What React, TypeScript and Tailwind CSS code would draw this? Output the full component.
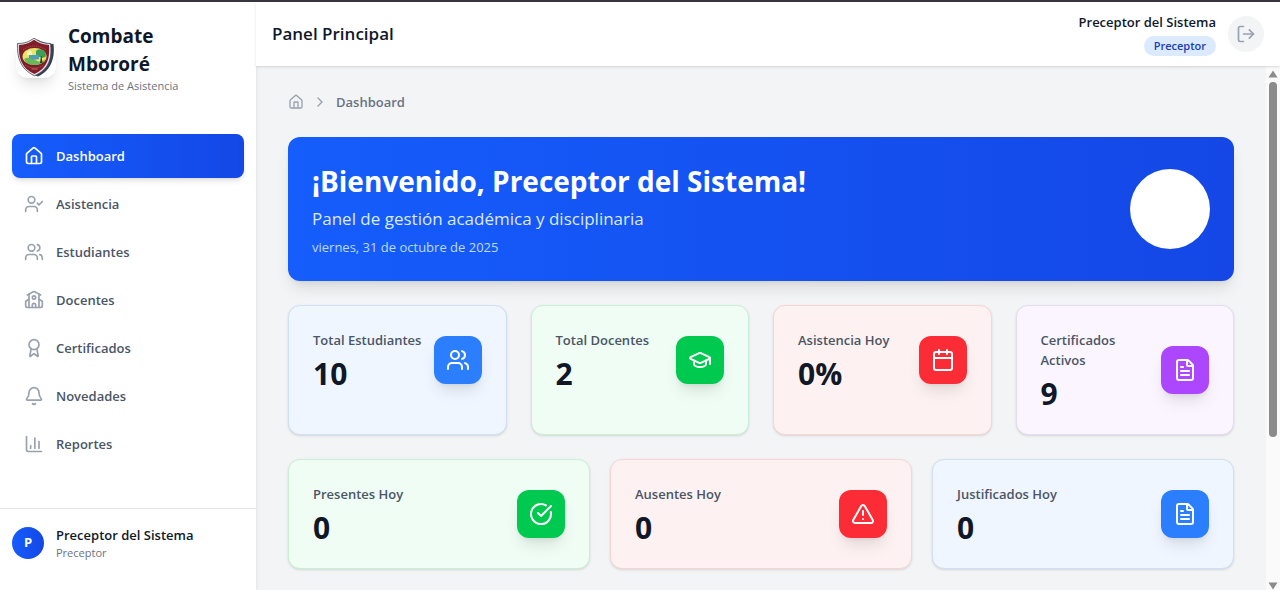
import {
  Award, Bell, Calendar, ChartColumn, ChevronRight, CircleCheckBig, FileText, GraduationCap,
  House, LogOut, School, TriangleAlert, UserCheck, Users, type LucideIcon,
} from "lucide-react";

const navItems: { label: string; icon: LucideIcon }[] = [
  { label: "Dashboard", icon: House },
  { label: "Asistencia", icon: UserCheck },
  { label: "Estudiantes", icon: Users },
  { label: "Docentes", icon: School },
  { label: "Certificados", icon: Award },
  { label: "Novedades", icon: Bell },
  { label: "Reportes", icon: ChartColumn },
];

type Tone = "blue" | "green" | "red" | "purple";

const cardTone: Record<Tone, string> = {
  blue: "bg-blue-50 border-[#cfdff5]",
  green: "bg-[#effdf5] border-[#c9efd6]",
  red: "bg-[#fef1f1] border-[#f8d5d5]",
  purple: "bg-purple-50 border-[#e4dbf5]",
};

const iconTone: Record<Tone, string> = {
  blue: "bg-[#2b7fff]",
  green: "bg-[#00c950]",
  red: "bg-[#fb2c36]",
  purple: "bg-[#ad46ff]",
};

type Stat = { label: string; value: string; icon: LucideIcon; tone: Tone };

const totals: Stat[] = [
  { label: "Total Estudiantes", value: "10", icon: Users, tone: "blue" },
  { label: "Total Docentes", value: "2", icon: GraduationCap, tone: "green" },
  { label: "Asistencia Hoy", value: "0%", icon: Calendar, tone: "red" },
  { label: "Certificados Activos", value: "9", icon: FileText, tone: "purple" },
];

const today: Stat[] = [
  { label: "Presentes Hoy", value: "0", icon: CircleCheckBig, tone: "green" },
  { label: "Ausentes Hoy", value: "0", icon: TriangleAlert, tone: "red" },
  { label: "Justificados Hoy", value: "0", icon: FileText, tone: "blue" },
];

function StatCard({ label, value, icon: Icon, tone }: Stat) {
  return (
    <article className={`rounded-xl border p-6 shadow-sm ${cardTone[tone]}`}>
      <div className="flex items-center justify-between gap-3">
        <div className="min-w-0 flex-1">
          <p className="text-[13px] leading-5 font-semibold text-gray-600">{label}</p>
          <p className="mt-2 text-3xl leading-8 font-bold text-gray-900">{value}</p>
        </div>
        <div className={`flex size-12 shrink-0 items-center justify-center rounded-xl text-white shadow-lg ${iconTone[tone]}`}>
          <Icon size={24} />
        </div>
      </div>
    </article>
  );
}

function Crest() {
  return (
    <div className="size-10 shrink-0 rounded-xl bg-white shadow-lg">
      <svg viewBox="0 0 40 40" className="size-10" role="img" aria-label="Escudo">
        <path d="M21 1.500C26 4 31 5.500 37.500 6C39 19 36 32 22 38.500C17 37 10 31 8 25Z" fill="#35414f" />
        <path d="M18 0C22.500 3.500 27.500 5.500 34.500 5.500C36 19 34 31 18.500 37.800C4 31 1 19 1.500 5.500C9 5.500 13.500 3.500 18 0Z" fill="#e9dfe2" stroke="#3b4f66" strokeWidth="0.8" />
        <path d="M18 1.800C22.500 5 27.500 7 33 7C34 19 32 30 18.500 36C5 30 2.500 19 3 7C9 7 13.500 5 18 1.800Z" fill="#801d29" />
        <path d="M7 12Q18.500 4 30 12M9 27Q18.500 33 28 27" fill="none" stroke="#b4646c" strokeWidth="0.8" strokeDasharray="1 1" />
        <ellipse cx="18.500" cy="18.500" rx="12" ry="8.500" fill="#e9e36b" />
        <path d="M20 13Q22 10 27 12Q31 15 29.500 19Q25 21 20 17Z" fill="#3c9f54" />
        <path d="M8 21Q13 18 19 22T29.500 21Q27 27 18.500 27T8 21Z" fill="#69b85a" />
        <path d="M13 17H23V21Q18 23 13 20Z" fill="#4f9db8" />
        <path d="M11 14Q14 11 16 14V17H11Z" fill="#f7f5bd" />
        <path d="M25.500 18L26.500 25H24L25 18Z" fill="#263d2c" />
        <path d="M15.500 31H21.500" stroke="#c08b90" strokeWidth="0.8" />
      </svg>
    </div>
  );
}

function Sidebar() {
  return (
    <aside className="z-10 flex w-64 shrink-0 flex-col bg-white shadow-md">
      <div className="flex items-center gap-3 px-4 pt-5 pb-4">
        <Crest />
        <div>
          <h1 className="text-[19px] leading-7 font-bold text-gray-900">Combate Mbororé</h1>
          <p className="text-[11px] leading-4 text-gray-500">Sistema de Asistencia</p>
        </div>
      </div>
      <nav aria-label="Principal" className="flex flex-1 flex-col gap-1 px-3 pt-6">
        {navItems.map(({ label, icon: Icon }, i) => (
          <a
            key={label}
            href="#"
            aria-current={i === 0 ? "page" : undefined}
            className={
              i === 0
                ? "flex h-11 items-center gap-3 rounded-lg bg-linear-to-r from-[#155dfc] to-[#1447e6] px-3 text-[13px] leading-5 font-semibold text-white shadow-md"
                : "flex h-11 items-center gap-3 rounded-lg px-3 text-[13px] leading-5 font-semibold text-gray-600"
            }
          >
            <Icon size={20} className={i === 0 ? "text-white" : "text-gray-400"} />
            {label}
          </a>
        ))}
      </nav>
      <div className="flex items-center gap-3 border-t border-gray-200 px-3 pt-4 pb-[29px]">
        <div className="flex size-8 items-center justify-center rounded-full bg-linear-to-r from-[#155dfc] to-[#1447e6] text-[13px] font-bold text-white">P</div>
        <div>
          <p className="text-[13px] leading-5 font-semibold text-gray-900">Preceptor del Sistema</p>
          <p className="text-[11px] leading-4 text-gray-500">Preceptor</p>
        </div>
      </div>
    </aside>
  );
}

function Header() {
  return (
    <header className="z-10 flex h-16 shrink-0 items-center justify-between bg-white px-4 shadow-sm">
      <h2 className="text-[17px] leading-7 font-semibold text-gray-900">Panel Principal</h2>
      <div className="flex items-center gap-3">
        <div className="flex flex-col items-end">
          <p className="text-[13px] leading-5 font-semibold text-gray-900">Preceptor del Sistema</p>
          <span className="mt-1 rounded-full bg-blue-100 px-[10px] text-[11px] leading-5 font-semibold text-blue-800">Preceptor</span>
        </div>
        <button type="button" aria-label="Cerrar sesión" className="flex size-9 items-center justify-center rounded-full bg-gray-100 text-gray-400">
          <LogOut size={20} />
        </button>
      </div>
    </header>
  );
}

function ScrollTrack() {
  return (
    <div aria-hidden="true" className="flex w-[14px] shrink-0 flex-col items-center bg-[#fafafa] pt-1">
      <svg viewBox="0 0 10 8" className="h-2 w-[10px] shrink-0" fill="#8b8b8b"><path d="M5 0.500L9.500 7.500H0.500Z" /></svg>
      <div className="mt-1 min-h-0 flex-1 self-stretch px-[3px]">
        <div className="h-[71%] rounded-full bg-[#8b8b8b]" />
      </div>
      <svg viewBox="0 0 10 8" className="h-2 w-[10px] shrink-0" fill="#8b8b8b"><path d="M0.500 0.500H9.500L5 7.500Z" /></svg>
    </div>
  );
}

export default function App() {
  return (
    <div className="flex h-screen overflow-hidden border-t-2 border-[#38363c] bg-gray-100 font-['Open_Sans','Noto_Sans',sans-serif]">
      <Sidebar />
      <div className="flex min-w-0 flex-1 flex-col">
        <Header />
        <div className="flex min-h-0 flex-1">
          <main className="min-w-0 flex-1 overflow-hidden px-8 pt-6">
            <nav aria-label="Ruta" className="flex h-6 items-center gap-2 text-[13px] leading-5 font-semibold text-gray-500">
              <a href="#" aria-label="Inicio" className="text-gray-400"><House size={16} /></a>
              <ChevronRight size={16} className="text-gray-400" />
              <span>Dashboard</span>
            </nav>
            <section className="mt-[23px] flex items-center justify-between rounded-xl bg-linear-to-r from-[#155dfc] to-[#1447e6] p-6 shadow-lg">
              <div>
                <h2 className="text-[28px] leading-10 font-bold text-white">¡Bienvenido, Preceptor del Sistema!</h2>
                <p className="mt-1 text-[17px] leading-7 text-blue-100">Panel de gestión académica y disciplinaria</p>
                <p className="mt-1 text-[13px] leading-5 text-blue-200">viernes, 31 de octubre de 2025</p>
              </div>
              <div className="size-20 shrink-0 rounded-full bg-white" />
            </section>
            <section aria-label="Totales" className="mt-6 grid grid-cols-4 gap-6">
              {totals.map((s) => <StatCard key={s.label} {...s} />)}
            </section>
            <section aria-label="Hoy" className="mt-6 grid grid-cols-3 gap-5">
              {today.map((s) => <StatCard key={s.label} {...s} />)}
            </section>
          </main>
          <ScrollTrack />
        </div>
      </div>
    </div>
  );
}
